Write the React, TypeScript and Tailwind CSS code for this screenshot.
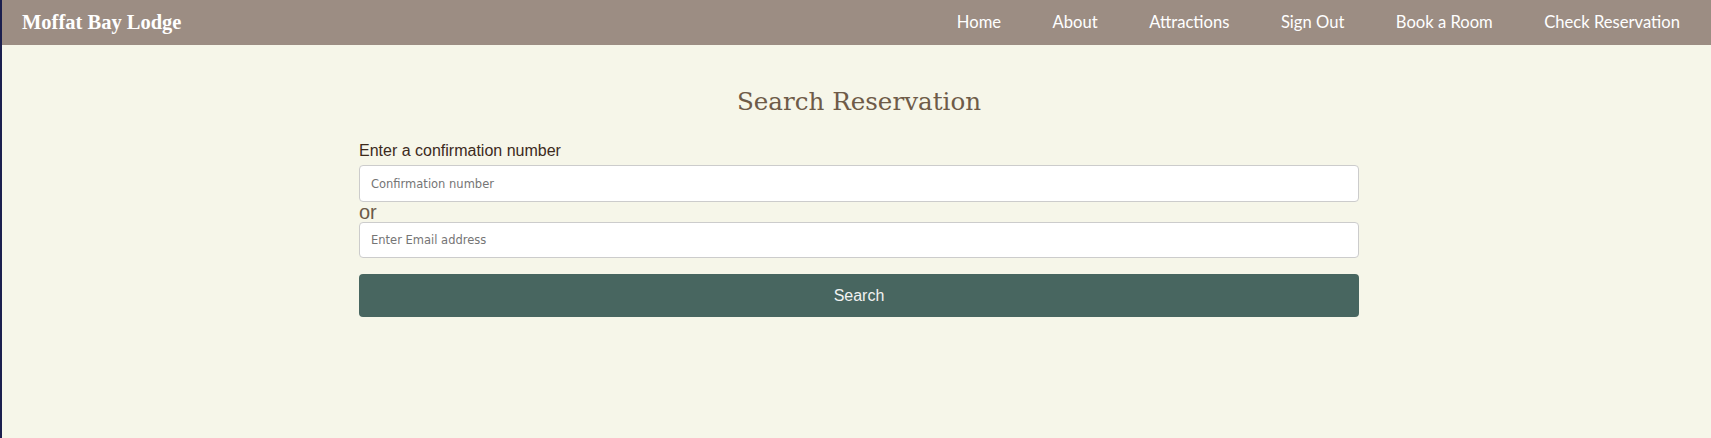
import React from "react";

const navItems = ["Home", "About", "Attractions", "Sign Out", "Book a Room", "Check Reservation"];

export default function App() {
  return (
    <div className="min-h-[438px] bg-[#f6f6e9] border-l-2 border-[#1b1f4e]">
      <nav className="h-[45px] bg-[#9c8d83] flex items-center justify-between pl-[20px] pr-[31px]">
        <div className="text-white font-bold text-[20.5px] [font-family:'Liberation_Serif',serif]">
          Moffat Bay Lodge
        </div>
        <ul className="flex items-center gap-[51.5px] text-white text-[16.6px] [font-family:Lato,sans-serif]">
          {navItems.map((item) => (
            <li key={item}>{item}</li>
          ))}
        </ul>
      </nav>
      <div className="pl-[5px]">
        <main className="w-[1000px] mx-auto">
          <h1 className="mt-[41px] h-[32px] leading-[32px] text-center text-[24.6px] text-[#6e5b48] [font-family:'DejaVu_Serif',serif]">
            Search Reservation
          </h1>
          <form className="flex flex-col">
            <label className="mt-[24px] h-[18px] leading-[18px] text-[16px] text-[#3c2a1c] [font-family:'Liberation_Sans',Arial,sans-serif]">
              Enter a confirmation number
            </label>
            <input
              type="text"
              placeholder="Confirmation number"
              className="mt-[5px] h-[37px] w-full bg-white border border-[#cccccc] rounded-[4px] pl-[11px] text-[11.5px] placeholder:text-[#757575] [font-family:'DejaVu_Sans',Verdana,sans-serif] outline-none"
            />
            <div className="h-[20px] leading-[20px] text-[20px] text-[#6b5a48] [font-family:'Liberation_Sans',Arial,sans-serif]">
              or
            </div>
            <input
              type="email"
              placeholder="Enter Email address"
              className="h-[36px] w-full bg-white border border-[#cccccc] rounded-[4px] pl-[11px] text-[11.5px] placeholder:text-[#757575] [font-family:'DejaVu_Sans',Verdana,sans-serif] outline-none"
            />
            <button
              type="button"
              className="mt-[16px] h-[43px] w-full bg-[#486660] rounded-[4px] text-[#f2f2f2] text-[16px] [font-family:'Liberation_Sans',Arial,sans-serif]"
            >
              Search
            </button>
          </form>
        </main>
      </div>
    </div>
  );
}
